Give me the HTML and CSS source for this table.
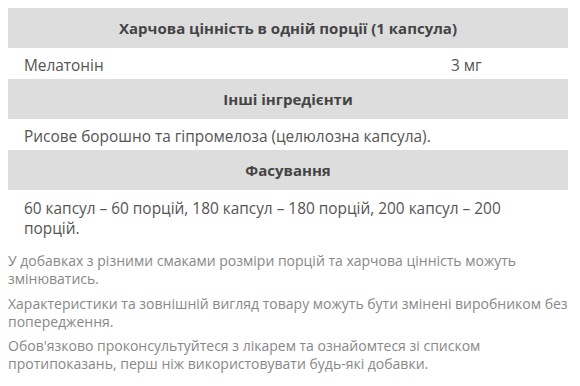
FILE: index.html
```html
<!DOCTYPE html>
<html lang="uk">
<head>
<meta charset="utf-8">
<link rel="stylesheet" href="styles.css">
</head>
<body>
<div class="wrap">
  <table class="facts">
    <colgroup><col class="c1"><col class="c2"></colgroup>
    <tr class="head"><th colspan="2">Харчова цінність в одній порції (1 капсула)</th></tr>
    <tr class="row"><td class="name">Мелатонін</td><td class="val">3 мг</td></tr>
    <tr class="head"><th colspan="2">Інші інгредієнти</th></tr>
    <tr class="row"><td colspan="2">Рисове борошно та гіпромелоза (целюлозна капсула).</td></tr>
    <tr class="head"><th colspan="2">Фасування</th></tr>
    <tr class="row tall"><td colspan="2">60 капсул – 60 порцій, 180 капсул – 180 порцій, 200 капсул – 200 порцій.</td></tr>
  </table>
  <div class="notes">
    <p>У добавках з різними смаками розміри порцій та харчова цінність можуть змінюватись.</p>
    <p>Характеристики та зовнішній вигляд товару можуть бути змінені виробником без попередження.</p>
    <p>Обов'язково проконсультуйтеся з лікарем та ознайомтеся зі списком протипоказань, перш ніж використовувати будь-які добавки.</p>
  </div>
</div>
</body>
</html>
```
FILE: styles.css
```css
html, body { margin: 0; padding: 0; background: #fff; }
body { font-family: "Open Sans", "Liberation Sans", sans-serif; color: #555; }
.wrap { padding: 8px; width: 560px; }
.facts { width: 560px; border-collapse: collapse; font-size: 15.4px; table-layout: fixed; }
.facts .c1 { width: 427px; }
.facts .c2 { width: 133px; }
.facts th { background: #dddddd; height: 40px; padding: 0 16px; font-size: 15px; font-weight: 700; color: #444; text-align: center; }
.facts td { padding: 8px 16px 4px; height: 19px; line-height: 19px; text-align: left; }
.facts .tall td { padding: 9px 16px 5px; line-height: 20px; }
.notes { font-size: 14px; color: #888; padding-top: 8px; }
.notes p { margin: 0 0 6px; line-height: 18px; }
.notes p:first-child { margin-bottom: 7px; }
```
